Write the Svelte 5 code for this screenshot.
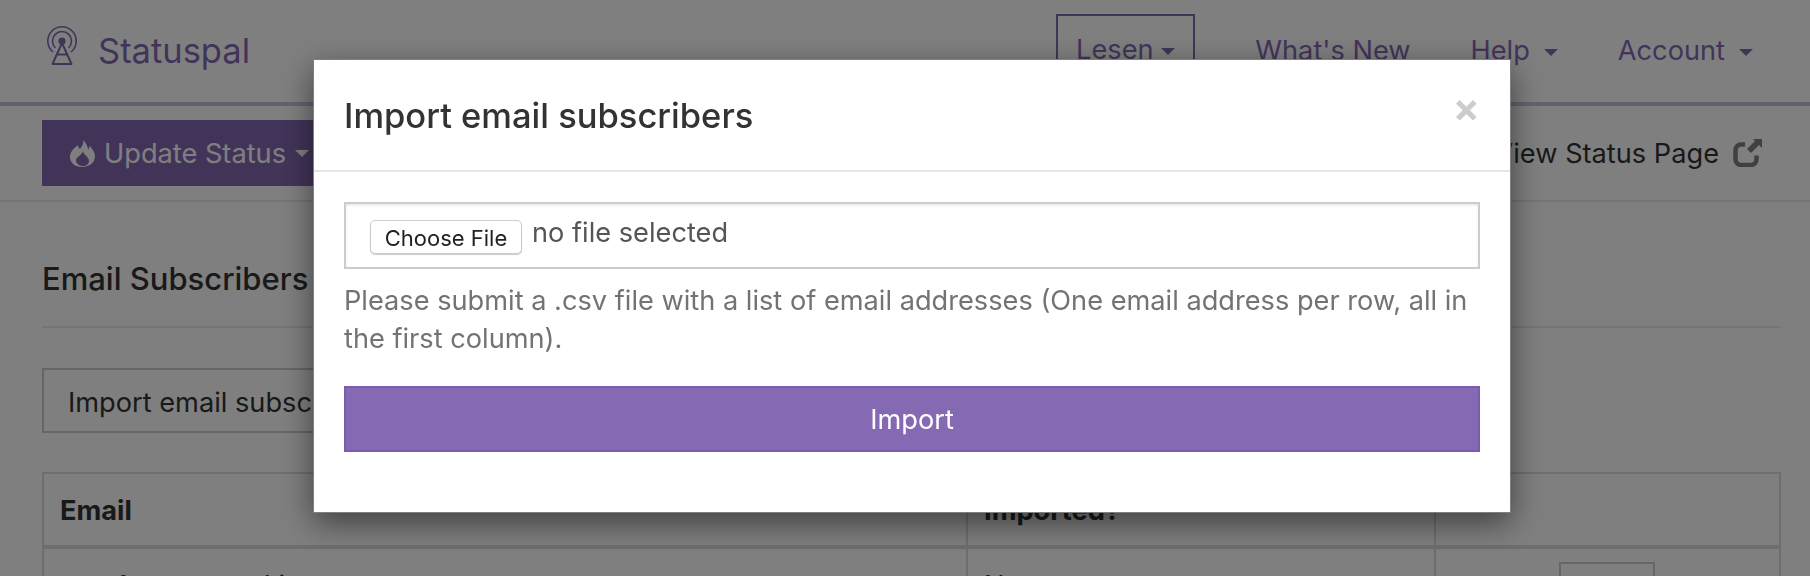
<script lang="ts">
	const nav = [
		{ label: "What's New", caret: false },
		{ label: 'Help', caret: true },
		{ label: 'Account', caret: true }
	];
</script>

<div class="page">
	<header class="navbar">
		<a class="brand" href="#top">
			<svg class="logo" viewBox="0 0 30 39" width="30" height="39" fill="none" stroke="currentColor">
				<path d="M6 26 A 14.2 14.2 0 1 1 24 26" stroke-width="1.6" />
				<path d="M8.5 22 A 9.5 9.5 0 1 1 21.5 22" stroke-width="1.6" />
				<circle cx="15" cy="15" r="3.6" fill="currentColor" stroke="none" />
				<path d="M15 17 L5.5 38 L24.5 38 Z M10 28.5 L20 28.5" stroke-width="2" stroke-linejoin="round" />
			</svg>
			<span>Statuspal</span>
		</a>
		<nav class="links">
			<a class="lang" href="#top">Lesen <i class="caret"></i></a>
			{#each nav as item}
				<a class="link" href="#top">{item.label}{#if item.caret}<i class="caret spaced"></i>{/if}</a>
			{/each}
		</nav>
	</header>

	<div class="subbar">
		<button class="update">
			<svg viewBox="0 0 25 27" width="25" height="27" fill="currentColor">
				<path
					fill-rule="evenodd"
					d="M13 0c1 4-1 6-3 9-1-1-2-2-2-4C4 8 0 12 0 17c0 6 5 10 12 10s13-4 13-11c0-4-3-7-5-10-1 1-1 3-2 4 0-4-2-7-5-10zm0 11c0 3 6 6 6 10 0 3-3 5-6 5s-7-2-7-6c0-3 6-5 7-9z"
				/>
			</svg>
			Update Status <i class="caret"></i>
		</button>
		<a class="view" href="#top">
			View Status Page
			<svg class="ext" viewBox="0 0 29 28" width="29" height="28">
				<path d="M12 5.500H8a5.500 5.500 0 0 0-5.500 5.500V20.500a5.500 5.500 0 0 0 5.500 5.500h10a5.500 5.500 0 0 0 5.500-5.500v-4" fill="none" stroke="currentColor" stroke-width="4.500" />
				<path d="M20 0h9v9l-3-3-8 8-4-4 8-8z" fill="currentColor" />
			</svg>
		</a>
	</div>

	<main class="content">
		<h2>Email Subscribers</h2>
		<hr />
		<button class="import-open">Import email subscribers</button>
		<table>
			<thead>
				<tr>
					<th class="c1">Email</th>
					<th class="c2">Imported?</th>
					<th></th>
				</tr>
			</thead>
			<tbody>
				<tr>
					<td>user1@statuspal.io</td>
					<td>No</td>
					<td class="act"><button class="small">Delete</button></td>
				</tr>
			</tbody>
		</table>
	</main>
</div>

<div class="backdrop"></div>

<div class="modal">
	<div class="modal-head">
		<h4>Import email subscribers</h4>
		<button class="close">×</button>
	</div>
	<div class="modal-body">
		<div class="file-box">
			<button class="choose">Choose File</button>
			<span class="none">no file selected</span>
		</div>
		<p class="help">Please submit a .csv file with a list of email addresses (One email address per row, all in the first column).</p>
		<button class="submit">Import</button>
	</div>
</div>

<style>
	:global(body) {
		margin: 0;
		height: 576px;
		overflow: hidden;
		background: #fff;
		font-family: Inter, 'Liberation Sans', sans-serif;
	}

	.page {
		font-size: 27.2px;
		color: #333;
		height: 576px;
		overflow: hidden;
	}

	a {
		color: inherit;
		text-decoration: none;
	}

	.navbar {
		height: 102px;
		border-bottom: 4px solid #cdc3e3;
		display: flex;
		justify-content: space-between;
		padding: 0 57px 0 47px;
		color: #8569b3;
	}

	.brand {
		display: flex;
		align-items: center;
		gap: 21px;
		font-size: 34.5px;
		height: 100px;
	}

	.logo {
		margin-top: -9px;
	}

	.links {
		display: flex;
		align-items: flex-start;
		padding-top: 14px;
		gap: 60px;
	}

	.links a {
		line-height: 74px;
	}

	.lang {
		border: 2px solid #8569b3;
		padding: 0 18px;
		height: 80px;
		box-sizing: border-box;
		line-height: 68px !important;
	}

	.caret {
		display: inline-block;
		width: 0;
		height: 0;
		vertical-align: middle;
		border-top: 7px solid currentColor;
		border-left: 7px solid transparent;
		border-right: 7px solid transparent;
	}

	.spaced {
		margin-left: 14px;
	}

	.subbar {
		height: 96px;
		box-sizing: border-box;
		border-bottom: 2px solid #eaeaea;
		display: flex;
		justify-content: space-between;
		align-items: flex-start;
		padding: 14px 48px 0 42px;
	}

	.update {
		height: 66px;
		width: 300px;
		background: #8569b3;
		border: 0;
		color: #fff;
		font: inherit;
		display: flex;
		align-items: center;
		gap: 9px;
		padding: 0 28px;
	}

	.view {
		display: flex;
		align-items: center;
		gap: 14px;
		height: 66px;
	}

	.ext {
		color: #808080;
	}

	.content {
		padding: 0 29px 0 42px;
	}

	h2 {
		margin: 0;
		padding-top: 58px;
		font-size: 31px;
		font-weight: 500;
		line-height: 38px;
		height: 66px;
	}

	hr {
		margin: 0 0 40px;
		border: 0;
		border-top: 2px solid #eaeaea;
	}

	.import-open {
		display: block;
		height: 65px;
		width: 500px;
		box-sizing: border-box;
		border: 2px solid #ccc;
		background: #fff;
		font: inherit;
		color: #333;
		text-align: left;
		padding: 4px 24px 0;
		margin-bottom: 39px;
	}

	table {
		width: 100%;
		border-collapse: collapse;
		table-layout: fixed;
	}

	th,
	td {
		border: 2px solid #ddd;
		text-align: left;
		padding: 0 16px;
	}

	th {
		height: 69px;
		border-bottom-width: 4px;
		padding-top: 2px;
	}

	td {
		vertical-align: top;
		padding-top: 20px;
	}

	.c1 {
		width: 890px;
	}

	.c2 {
		width: 434px;
	}

	.act {
		text-align: right;
		padding-right: 124px;
		padding-top: 13px;
	}

	.small {
		height: 60px;
		width: 96px;
		border: 2px solid #ccc;
		background: #fff;
		font: inherit;
		color: #333;
		padding: 16px 0 0;
	}

	.backdrop {
		position: fixed;
		inset: 0;
		background: rgba(0, 0, 0, 0.5);
	}

	.modal {
		position: fixed;
		left: 313px;
		top: 59px;
		width: 1196px;
		height: 452px;
		background: #fff;
		border: 1px solid rgba(0, 0, 0, 0.5);
		box-shadow: 0 10px 30px rgba(0, 0, 0, 0.5);
		font-size: 27.2px;
		color: #333;
	}

	.modal-head {
		height: 110px;
		border-bottom: 2px solid #e5e5e5;
		display: flex;
		justify-content: space-between;
		padding: 0 30px;
	}

	h4 {
		margin: 0;
		font-size: 34.5px;
		font-weight: 500;
		line-height: 112px;
	}

	.close {
		border: 0;
		background: none;
		padding: 0;
		height: 96px;
		font: 700 40px/96px Inter, 'Liberation Sans', sans-serif;
		color: #ccc;
	}

	.modal-body {
		padding: 30px 30px 0;
	}

	.file-box {
		height: 67px;
		box-sizing: border-box;
		border: 2px solid #ccc;
		box-shadow: inset 0 2px 2px rgba(0, 0, 0, 0.075);
		display: flex;
		align-items: flex-start;
		gap: 10px;
		padding: 16px 24px 0;
		color: #555;
	}

	.choose {
		height: 34px;
		width: 152px;
		padding: 1px 0 0;
		background: #fff;
		border: 1px solid #ccc;
		border-radius: 5px;
		box-shadow: 0 1px 1px rgba(0, 0, 0, 0.2);
		font: 22px Inter, 'Liberation Sans', sans-serif;
		color: #222;
	}

	.none {
		line-height: 26px;
	}

	.help {
		margin: 13px 0 0;
		line-height: 38px;
		color: #737373;
		height: 104px;
	}

	.submit {
		display: block;
		width: 100%;
		height: 66px;
		background: #8569b3;
		border: 2px solid #7a5cae;
		color: #fff;
		font: inherit;
	}
</style>
